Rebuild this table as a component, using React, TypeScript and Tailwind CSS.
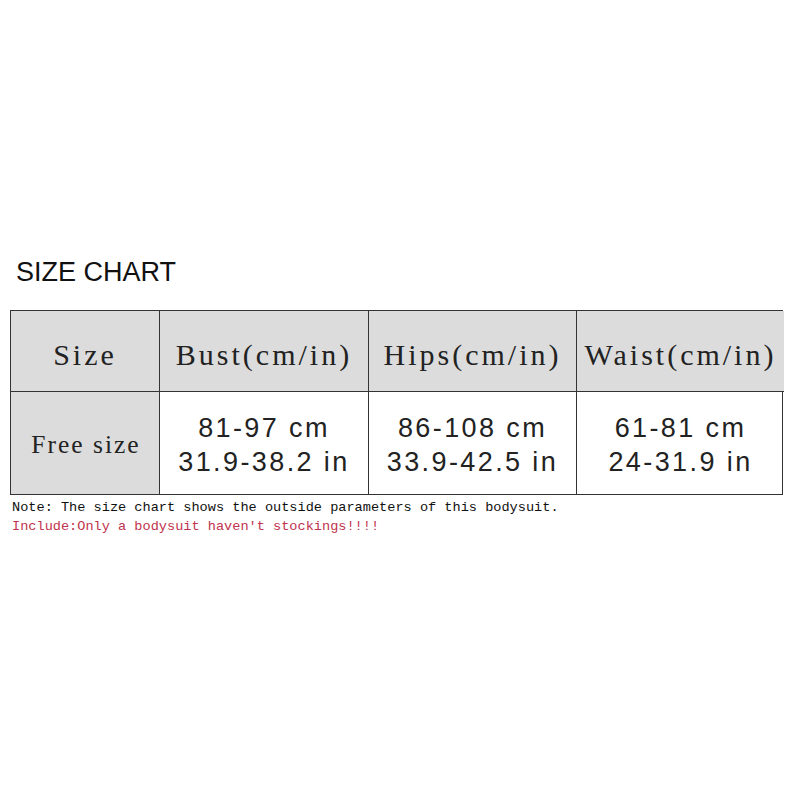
const headers = ["Size", "Bust(cm/in)", "Hips(cm/in)", "Waist(cm/in)"];

const values = [
  ["81-97 cm", "31.9-38.2 in"],
  ["86-108 cm", "33.9-42.5 in"],
  ["61-81 cm", "24-31.9 in"],
];

const serif = "font-['Liberation_Serif',serif]";

export default function App() {
  return (
    <div className="w-[800px] h-[800px] bg-white text-[#222] pt-[256px] px-[10px]">
      {/* title */}
      <h1 className="pl-[6px] h-[32px] leading-[32px] text-[27px] font-['Liberation_Sans',sans-serif] text-[#111]">
        SIZE CHART
      </h1>

      {/* table */}
      <div className="mt-[22px] w-[773px] grid grid-cols-[148px_209px_208px_208px] border border-[#333]">
        {headers.map((h, i) => (
          <div
            key={h}
            className={`h-[81px] bg-[#dcdcdc] flex items-center justify-center pt-[6px] text-[30px] tracking-[3px] ${serif} ${
              i > 0 ? "border-l border-[#333]" : ""
            } border-b border-[#333]`}
          >
            {h}
          </div>
        ))}

        <div className={`h-[102px] bg-[#dcdcdc] flex items-center justify-center pl-[2px] pt-[4px] text-[25.5px] tracking-[2px] ${serif}`}>
          Free size
        </div>
        {values.map((v) => (
          <div
            key={v[0]}
            className="h-[102px] border-l border-[#333] flex flex-col items-center justify-center pt-[4px] font-['Liberation_Sans',sans-serif] text-[27px] leading-[34px] tracking-[2.4px]"
          >
            <span>{v[0]}</span>
            <span>{v[1]}</span>
          </div>
        ))}
      </div>

      {/* notes */}
      <div className="pl-[2px] pt-[3px] font-['Liberation_Mono',monospace] text-[13.6px] leading-[19px]">
        <p className="text-[#111]">Note: The size chart shows the outside parameters of this bodysuit.</p>
        <p className="text-[#c0334d]">Include:Only a bodysuit haven't stockings!!!!</p>
      </div>
    </div>
  );
}
